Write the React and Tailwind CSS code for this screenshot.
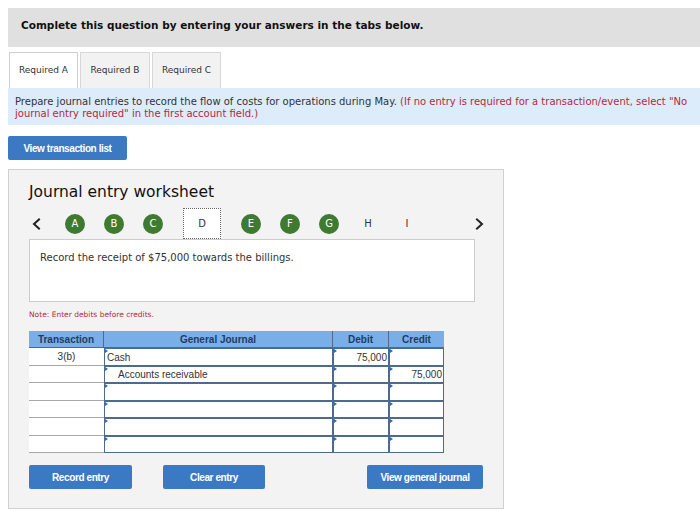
import React from "react";

const V = { fontFamily: '"DejaVu Sans", Verdana, sans-serif' };
const A = { fontFamily: '"Liberation Sans", Arial, sans-serif' };

function Tri() {
  return (
    <span className="absolute left-0 top-0 w-0 h-0 border-t-[2px] border-b-[2px] border-l-[3px] border-t-transparent border-b-transparent border-l-[#2f6db5]" />
  );
}

function InputCell({ children, className = "", align = "left" }) {
  return (
    <div
      className={`relative bg-white border border-[#4d6b8d] h-full flex items-center ${
        align === "right" ? "justify-end pr-[1px]" : "justify-start"
      } ${className}`}
    >
      <Tri />
      {children}
    </div>
  );
}

function Circle({ l }) {
  return (
    <div className="w-[39px] flex justify-center">
      <div className="w-[20px] h-[20px] rounded-full bg-[#3e7b31] text-white text-[10px] flex items-center justify-center" style={V}>
        {l}
      </div>
    </div>
  );
}

function Btn({ children, w }) {
  return (
    <div
      className={`${w} h-[24px] bg-[#3b79c3] rounded-[2px] text-white text-[10px] font-bold flex items-center justify-center tracking-[-0.4px]`}
      style={A}
    >
      {children}
    </div>
  );
}

function Chev({ dir }) {
  return (
    <svg width="9" height="12" viewBox="0 0 9 12" fill="none" stroke="#222" strokeWidth="2" strokeLinecap="square">
      {dir === "left" ? <path d="M7 1.5 L2 6 L7 10.5" /> : <path d="M2 1.5 L7 6 L2 10.5" />}
    </svg>
  );
}

export default function App() {
  const rows = [
    { t: "3(b)", g: "Cash", gi: false, d: "75,000", c: "" },
    { t: "", g: "Accounts receivable", gi: true, d: "", c: "75,000" },
    { t: "", g: "", d: "", c: "" },
    { t: "", g: "", d: "", c: "" },
    { t: "", g: "", d: "", c: "" },
    { t: "", g: "", d: "", c: "" },
  ];
  return (
    <div className="w-[700px] h-[520px] bg-white pt-[8px] pl-[8px] text-[#222]" style={V}>
      <div className="h-[39px] bg-[#e0e0e0] flex items-center pl-[13px] pb-[3px] text-[10.5px] font-bold text-[#111]">
        Complete this question by entering your answers in the tabs below.
      </div>
      <div className="flex mt-[5px] ml-[1px] gap-[2px] h-[36px] text-[9px] text-[#333]">
        <div className="w-[69px] bg-white border border-[#cfcfcf] border-b-0 flex items-center justify-center">Required A</div>
        <div className="w-[70px] bg-[#f2f2f2] border border-[#d8d8d8] border-b-0 flex items-center justify-center">Required B</div>
        <div className="w-[69px] bg-[#f2f2f2] border border-[#d8d8d8] border-b-0 flex items-center justify-center">Required C</div>
      </div>
      <div className="h-[37px] bg-[#ddecfa] pl-[7px] pt-[8px] pr-[10px] text-[10px] leading-[12px] text-[#333]">
        Prepare journal entries to record the flow of costs for operations during May.{" "}
        <span className="text-[#b8283c]">
          (If no entry is required for a transaction/event, select "No journal entry required" in the first account field.)
        </span>
      </div>
      <div className="mt-[11px]">
        <Btn w="w-[119px]">View transaction list</Btn>
      </div>
      <div className="mt-[9px] w-[496px] h-[340px] bg-[#f3f3f3] border border-[#d0d0d0] pl-[20px] pt-[12px]">
        <div className="text-[15.5px] leading-[20px] text-[#111]">Journal entry worksheet</div>
        <div className="mt-[6px] flex items-center h-[31px] text-[10px] text-[#333]">
          <div className="w-[26.5px] pl-[3px] flex items-center">
            <Chev dir="left" />
          </div>
          <Circle l="A" />
          <Circle l="B" />
          <Circle l="C" />
          <div className="w-[59px] flex justify-center">
            <div className="w-[38px] h-[31px] bg-white border border-dotted border-[#666] flex items-center justify-center">D</div>
          </div>
          <Circle l="E" />
          <Circle l="F" />
          <Circle l="G" />
          <div className="w-[39px] text-center">H</div>
          <div className="w-[39px] text-center">I</div>
          <div className="ml-[48px] flex items-center">
            <Chev dir="right" />
          </div>
        </div>
        <div className="w-[446px] h-[63px] bg-white border border-[#cccccc] pl-[10px] pt-[10px] text-[10px] text-[#333]">
          Record the receipt of $75,000 towards the billings.
        </div>
        <div className="mt-[7px] text-[7.5px] text-[#b8283c]">Note: Enter debits before credits.</div>
        <div className="mt-[11px] w-[415px] text-[10px]" style={A}>
          <div className="grid grid-cols-[75px_229px_56px_55px] h-[17px] bg-[#79aee8] text-[#1f3c63] font-bold border-b border-[#4d6b8d]">
            <div className="flex items-center justify-center border-r border-[#4d6b8d]">Transaction</div>
            <div className="flex items-center justify-center border-r border-[#4d6b8d]">General Journal</div>
            <div className="flex items-center justify-center border-r border-[#4d6b8d]">Debit</div>
            <div className="flex items-center justify-center">Credit</div>
          </div>
          {rows.map((r, i) => (
            <div key={i} className="grid grid-cols-[75px_229px_56px_55px] h-[17.5px] text-[#333]">
              <div className="bg-white border-b border-[#a8a8a8] flex items-center justify-center">{r.t}</div>
              <InputCell>
                <span className={r.gi ? "pl-[13px]" : "pl-[2px]"}>{r.g}</span>
              </InputCell>
              <InputCell align="right">{r.d}</InputCell>
              <InputCell align="right">{r.c}</InputCell>
            </div>
          ))}
        </div>
        <div className="mt-[12px] flex">
          <Btn w="w-[103px]">Record entry</Btn>
          <div className="ml-[31px]">
            <Btn w="w-[102px]">Clear entry</Btn>
          </div>
          <div className="ml-[102px]">
            <Btn w="w-[116px]">View general journal</Btn>
          </div>
        </div>
      </div>
    </div>
  );
}
